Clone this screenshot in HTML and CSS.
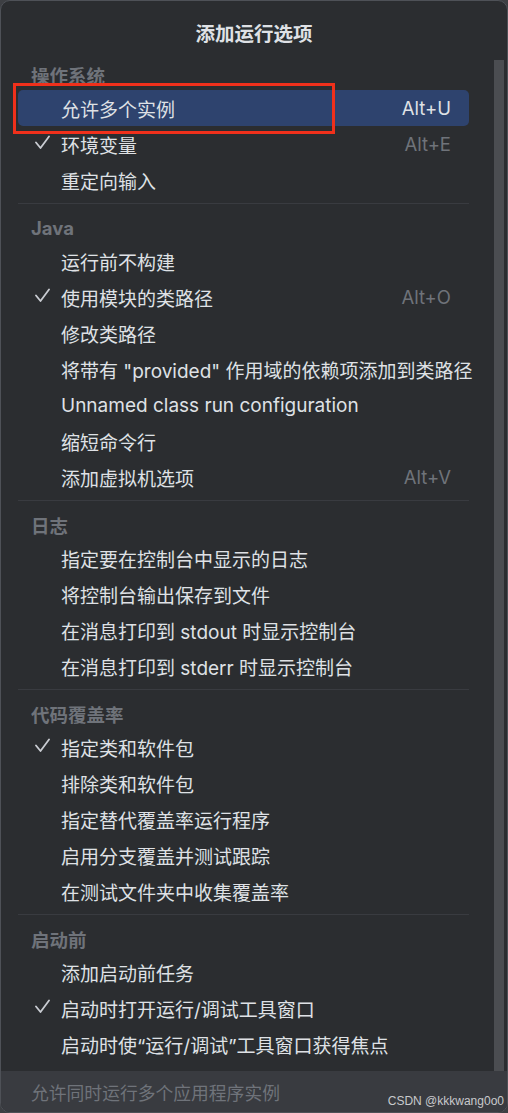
FILE: index.html
```html
<!DOCTYPE html>
<html lang="zh">
<head>
<meta charset="utf-8">
<title>添加运行选项</title>
<link rel="stylesheet" href="styles.css">
</head>
<body>
<div class="popup">
  <div class="title">添加运行选项</div>
  <div class="scroll-area">
    <div class="list">
      <div class="section-header">操作系统</div>
      <div class="row selected"><span class="check"></span><span class="label">允许多个实例</span><span class="shortcut">Alt+U</span></div>
      <div class="row"><span class="check"><svg viewBox="0 0 16 16" width="16" height="16"><path d="M2 7.5 L6.5 13 L15 1.5" fill="none" stroke="#c9ccd2" stroke-width="1.8" stroke-linecap="round" stroke-linejoin="round"/></svg></span><span class="label">环境变量</span><span class="shortcut">Alt+E</span></div>
      <div class="row"><span class="check"></span><span class="label">重定向输入</span></div>
      <div class="separator"></div>

      <div class="section-header">Java</div>
      <div class="row"><span class="check"></span><span class="label">运行前不构建</span></div>
      <div class="row"><span class="check"><svg viewBox="0 0 16 16" width="16" height="16"><path d="M2 7.5 L6.5 13 L15 1.5" fill="none" stroke="#c9ccd2" stroke-width="1.8" stroke-linecap="round" stroke-linejoin="round"/></svg></span><span class="label">使用模块的类路径</span><span class="shortcut">Alt+O</span></div>
      <div class="row"><span class="check"></span><span class="label">修改类路径</span></div>
      <div class="row"><span class="check"></span><span class="label">将带有 "provided" 作用域的依赖项添加到类路径</span></div>
      <div class="row"><span class="check"></span><span class="label">Unnamed class run configuration</span></div>
      <div class="row"><span class="check"></span><span class="label">缩短命令行</span></div>
      <div class="row"><span class="check"></span><span class="label">添加虚拟机选项</span><span class="shortcut">Alt+V</span></div>
      <div class="separator"></div>

      <div class="section-header">日志</div>
      <div class="row"><span class="check"></span><span class="label">指定要在控制台中显示的日志</span></div>
      <div class="row"><span class="check"></span><span class="label">将控制台输出保存到文件</span></div>
      <div class="row"><span class="check"></span><span class="label">在消息打印到 stdout 时显示控制台</span></div>
      <div class="row"><span class="check"></span><span class="label">在消息打印到 stderr 时显示控制台</span></div>
      <div class="separator"></div>

      <div class="section-header">代码覆盖率</div>
      <div class="row"><span class="check"><svg viewBox="0 0 16 16" width="16" height="16"><path d="M2 7.5 L6.5 13 L15 1.5" fill="none" stroke="#c9ccd2" stroke-width="1.8" stroke-linecap="round" stroke-linejoin="round"/></svg></span><span class="label">指定类和软件包</span></div>
      <div class="row"><span class="check"></span><span class="label">排除类和软件包</span></div>
      <div class="row"><span class="check"></span><span class="label">指定替代覆盖率运行程序</span></div>
      <div class="row"><span class="check"></span><span class="label">启用分支覆盖并测试跟踪</span></div>
      <div class="row"><span class="check"></span><span class="label">在测试文件夹中收集覆盖率</span></div>
      <div class="separator"></div>

      <div class="section-header">启动前</div>
      <div class="row"><span class="check"></span><span class="label">添加启动前任务</span></div>
      <div class="row"><span class="check"><svg viewBox="0 0 16 16" width="16" height="16"><path d="M2 7.5 L6.5 13 L15 1.5" fill="none" stroke="#c9ccd2" stroke-width="1.8" stroke-linecap="round" stroke-linejoin="round"/></svg></span><span class="label">启动时打开运行/调试工具窗口</span></div>
      <div class="row"><span class="check"></span><span class="label">启动时使“运行/调试”工具窗口获得焦点</span></div>
    </div>
    <div class="scrollbar"></div>
  </div>
  <div class="footer">允许同时运行多个应用程序实例</div>
  <div class="annotation"></div>
  <div class="watermark">CSDN @kkkwang0o0</div>
</div>
</body>
</html>
```
FILE: styles.css
```css
* { box-sizing: border-box; }
html, body {
  margin: 0;
  padding: 0;
  background: #3d3f43;
}
body {
  font-family: Inter, "Noto Sans CJK SC", sans-serif;
  color: #dfe1e5;
}
.popup {
  position: relative;
  width: 508px;
  height: 1113px;
  background: #2b2d30;
  border: 1px solid #4e5157;
  border-radius: 10px;
  overflow: hidden;
  display: flex;
  flex-direction: column;
}
.title {
  height: 59px;
  flex: none;
  display: flex;
  align-items: center;
  justify-content: center;
  padding-top: 4px;
  font-size: 19.5px;
  font-weight: 700;
  color: #dfe1e5;
}
.scroll-area {
  flex: 1;
  display: flex;
  min-height: 0;
  overflow: hidden;
}
.list {
  width: 493px;
  padding-left: 17px;
  padding-right: 25px;
  flex: none;
}
.scrollbar {
  width: 10px;
  flex: none;
  background: #4b4d51;
}
.section-header {
  height: 30px;
  display: flex;
  align-items: center;
  padding-left: 13px;
  font-size: 18.5px;
  font-weight: 700;
  color: #6f737a;
}
.row {
  height: 36px;
  display: flex;
  align-items: center;
  border-radius: 5px;
  font-size: 19px;
  white-space: nowrap;
}
.row.selected {
  background: #2e436e;
}
.check {
  width: 43px;
  flex: none;
  display: flex;
  align-items: center;
  padding-left: 16px;
  height: 100%;
}
.check svg { display: block; margin-top: -2px; }
.label {
  flex: 1;
  color: #dfe1e5;
}
.shortcut {
  padding-right: 18px;
  color: #6f737a;
  font-size: 18.5px;
}
.row.selected .shortcut { color: #dfe1e5; }
.separator {
  height: 15px;
  position: relative;
}
.separator::after {
  content: "";
  position: absolute;
  left: 0;
  right: 0;
  top: 5px;
  height: 1px;
  background: #393b40;
}
.footer {
  height: 41px;
  flex: none;
  background: #393b40;
  display: flex;
  align-items: center;
  padding-left: 30px;
  font-size: 17.8px;
  color: #6f737a;
}
.annotation {
  position: absolute;
  left: 12px;
  top: 82px;
  width: 322px;
  height: 51px;
  border: 3px solid #f0301b;
}
.watermark {
  position: absolute;
  right: 3px;
  bottom: 4px;
  font-family: "Liberation Sans", "Noto Sans CJK SC", sans-serif;
  font-size: 12px;
  color: #c8c9cc;
}
```
